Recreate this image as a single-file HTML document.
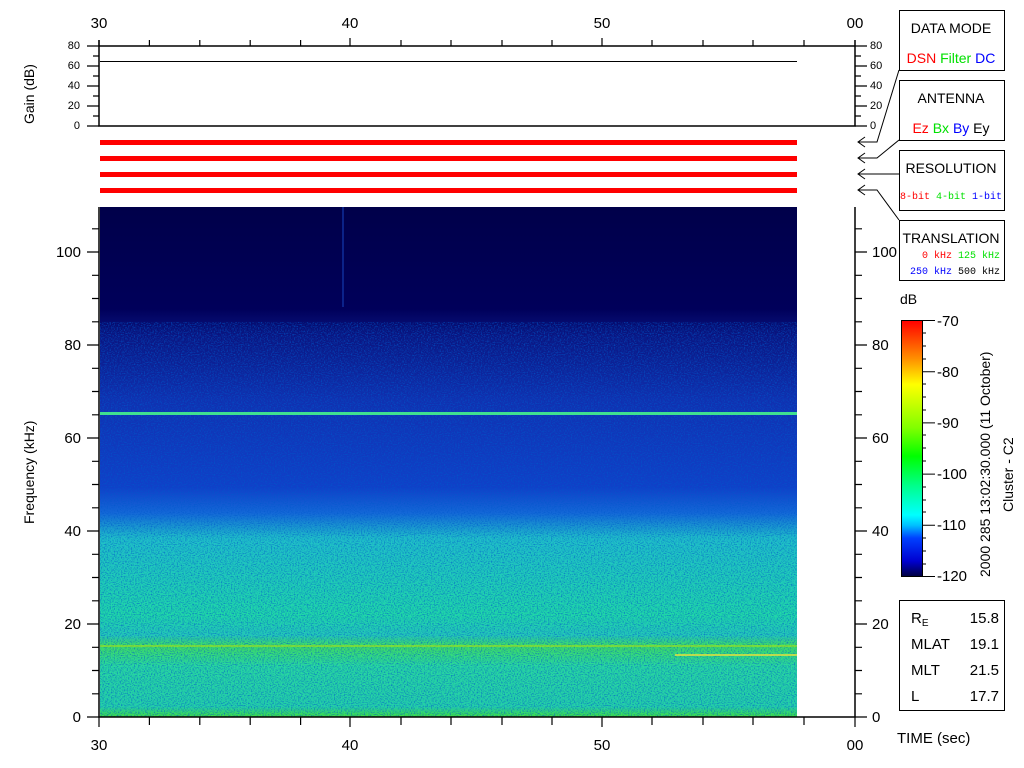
<!DOCTYPE html>
<html><head><meta charset="utf-8"><style>
html,body{margin:0;padding:0;background:#fff;}
svg{display:block;}
text{font-family:"Liberation Sans",sans-serif;}
.m{font-family:"Liberation Mono",monospace;font-size:11px;}
</style></head><body>
<svg width="1024" height="768" viewBox="0 0 1024 768" xmlns="http://www.w3.org/2000/svg">
<defs>
<linearGradient id="sp" x1="0" y1="0" x2="0" y2="1">
<stop offset="0" stop-color="#00004a"/>
<stop offset="0.2" stop-color="#00005a"/>
<stop offset="0.25" stop-color="#0a1480"/>
<stop offset="0.38" stop-color="#1030b0"/>
<stop offset="0.55" stop-color="#1040c8"/>
<stop offset="0.6" stop-color="#1468d8"/>
<stop offset="0.65" stop-color="#20c0c8"/>
<stop offset="0.8" stop-color="#20d8a8"/>
<stop offset="0.84" stop-color="#24c8b8"/>
<stop offset="0.86" stop-color="#40e060"/>
<stop offset="0.9" stop-color="#28d8a0"/>
<stop offset="0.98" stop-color="#24d0a8"/>
<stop offset="1" stop-color="#40e040"/>
</linearGradient>
<linearGradient id="cb" x1="0" y1="1" x2="0" y2="0">
<stop offset="0" stop-color="#000040"/>
<stop offset="0.06" stop-color="#0000d0"/>
<stop offset="0.15" stop-color="#0040ff"/>
<stop offset="0.2" stop-color="#00c0ff"/>
<stop offset="0.24" stop-color="#00ffff"/>
<stop offset="0.35" stop-color="#00ff90"/>
<stop offset="0.47" stop-color="#00ff00"/>
<stop offset="0.58" stop-color="#80ff00"/>
<stop offset="0.75" stop-color="#ffff00"/>
<stop offset="0.85" stop-color="#ff9000"/>
<stop offset="1" stop-color="#ff0000"/>
</linearGradient>
<filter id="nz" x="0" y="0" width="1" height="1">
<feTurbulence type="fractalNoise" baseFrequency="0.7 0.9" numOctaves="1" seed="3"/>
<feColorMatrix values="0 0 0 0 0  0 0 0 0 0.1  0 0 0 0 0.6  2.5 0 0 0 -1.1"/>
</filter>
</defs>

<rect x="100" y="207" width="697" height="510" fill="url(#sp)"/>
<rect x="100" y="322" width="697" height="395" filter="url(#nz)" opacity="0.8"/>
<rect x="100" y="412" width="697" height="3" fill="#40e090"/>
<rect x="100" y="645" width="697" height="2" fill="#a0e020" opacity="0.6"/>
<rect x="675" y="654" width="122" height="2" fill="#e0e040" opacity="0.8"/>
<rect x="342" y="207" width="2" height="100" fill="#1030a0" opacity="0.7"/>

<g stroke="#000" stroke-width="1.5" fill="none">
<path d="M99 40V126H855V40M99 46H855"/>
<path d="M100 61.5H797" stroke-width="1"/>
<path d="M99 207V717H855V207"/>
</g>

<g fill="#ff0000">
<rect x="100" y="140" width="697" height="5"/>
<rect x="100" y="156" width="697" height="5"/>
<rect x="100" y="172" width="697" height="5"/>
<rect x="100" y="188" width="697" height="5"/>
</g>

<g stroke="#000" stroke-width="1.2">
<path d="M99 40V46M149.4 40V46M199.8 40V46M250.2 40V46M300.6 40V46M350 38V46M401 40V46M451 40V46M502 40V46M552 40V46M602 38V46M652 40V46M703 40V46M753 40V46M804 40V46"/>
<path d="M149.4 717V725M199.8 717V725M250.2 717V725M300.6 717V725M350 717V727M401 717V725M451 717V725M502 717V725M552 717V725M602 717V727M652 717V725M703 717V725M753 717V725M804 717V725M855 717V727M99 717V727"/>
<path d="M87 46H99M93 56H99M87 66H99M93 76H99M87 86H99M93 96H99M87 106H99M93 116H99M87 126H99"/>
<path d="M855 46H867M855 56H861M855 66H867M855 76H861M855 86H867M855 96H861M855 106H867M855 116H861M855 126H867"/>
<path d="M87 717H99M92 693.8H99M92 670.5H99M92 647.3H99M87 624H99M92 600.8H99M92 577.5H99M92 554.3H99M87 531H99M92 507.8H99M92 484.5H99M92 461.3H99M87 438H99M92 414.8H99M92 391.5H99M92 368.3H99M87 345H99M92 321.8H99M92 298.5H99M92 275.3H99M87 252H99M92 228.8H99"/>
<path d="M855 717H867M855 693.8H862M855 670.5H862M855 647.3H862M855 624H867M855 600.8H862M855 577.5H862M855 554.3H862M855 531H867M855 507.8H862M855 484.5H862M855 461.3H862M855 438H867M855 414.8H862M855 391.5H862M855 368.3H862M855 345H867M855 321.8H862M855 298.5H862M855 275.3H862M855 252H867M855 228.8H862"/>
</g>

<g font-size="15" text-anchor="middle">
<text x="99" y="28">30</text><text x="350" y="28">40</text><text x="602" y="28">50</text><text x="855" y="28">00</text>
<text x="99" y="750">30</text><text x="350" y="750">40</text><text x="602" y="750">50</text><text x="855" y="750">00</text>
</g>
<g class="m" text-anchor="end">
<text x="80" y="49">80</text><text x="80" y="69">60</text><text x="80" y="89">40</text><text x="80" y="109">20</text><text x="80" y="129">0</text>
</g>
<g class="m">
<text x="870" y="49">80</text><text x="870" y="69">60</text><text x="870" y="89">40</text><text x="870" y="109">20</text><text x="870" y="129">0</text>
</g>
<g font-size="15" text-anchor="end">
<text x="81" y="722">0</text><text x="81" y="629">20</text><text x="81" y="536">40</text><text x="81" y="443">60</text><text x="81" y="350">80</text><text x="81" y="257">100</text>
</g>
<g font-size="15">
<text x="872" y="722">0</text><text x="872" y="629">20</text><text x="872" y="536">40</text><text x="872" y="443">60</text><text x="872" y="350">80</text><text x="872" y="257">100</text>
</g>
<text font-size="14" transform="translate(34,124) rotate(-90)">Gain (dB)</text>
<text font-size="14" transform="translate(34,524) rotate(-90)">Frequency (kHz)</text>

<g stroke="#000" stroke-width="1" fill="none">
<path d="M899 70L877 142H858M865 137L858 142L865 147"/>
<path d="M899 140L877 158H858M865 153L858 158L865 163"/>
<path d="M899 174H858M865 169L858 174L865 179"/>
<path d="M899 220L877 190H858M865 185L858 190L865 195"/>
<rect x="899.5" y="10.5" width="105" height="60"/>
<rect x="899.5" y="80.5" width="105" height="60"/>
<rect x="899.5" y="150.5" width="105" height="60"/>
<rect x="899.5" y="220.5" width="105" height="60"/>
<rect x="899.5" y="600.5" width="105" height="110"/>
</g>
<g font-size="14" text-anchor="middle">
<text x="951" y="33">DATA MODE</text>
<text x="951" y="103">ANTENNA</text>
<text x="951" y="173">RESOLUTION</text>
<text x="951" y="243">TRANSLATION</text>
</g>
<text font-size="14" x="951" y="63" text-anchor="middle"><tspan fill="#ff0000">DSN</tspan> <tspan fill="#00e000">Filter</tspan> <tspan fill="#0000ff">DC</tspan></text>
<text font-size="14" x="951" y="133" text-anchor="middle"><tspan fill="#ff0000">Ez</tspan>  <tspan fill="#00e000">Bx</tspan>  <tspan fill="#0000ff">By</tspan>  <tspan fill="#000">Ey</tspan></text>
<text class="m" x="951" y="199" text-anchor="middle" style="font-size:10px"><tspan fill="#ff0000">8-bit</tspan> <tspan fill="#00e000">4-bit</tspan> <tspan fill="#0000ff">1-bit</tspan></text>
<text class="m" style="font-size:10px" x="1000" y="258" text-anchor="end"><tspan fill="#ff0000">0 kHz</tspan> <tspan fill="#00e000">125 kHz</tspan></text>
<text class="m" style="font-size:10px" x="1000" y="274" text-anchor="end"><tspan fill="#0000ff">250 kHz</tspan> <tspan fill="#000">500 kHz</tspan></text>

<text font-size="14" x="900" y="304">dB</text>
<rect x="901.5" y="320.5" width="21" height="256" fill="url(#cb)" stroke="#000" stroke-width="1"/>
<g stroke="#000" stroke-width="1">
<path d="M922 320.5H935M922 371.7H935M922 422.9H935M922 474.1H935M922 525.3H935M922 576.5H935"/>
<path d="M922 333H926M922 346H926M922 359H926M922 384H926M922 397H926M922 410H926M922 435H926M922 448H926M922 461H926M922 487H926M922 500H926M922 512H926M922 538H926M922 551H926M922 564H926"/>
</g>
<g font-size="15">
<text x="937" y="326">-70</text><text x="937" y="377">-80</text><text x="937" y="428">-90</text><text x="937" y="479">-100</text><text x="937" y="530">-110</text><text x="937" y="581">-120</text>
</g>
<text font-size="14" transform="translate(990,577) rotate(-90)">2000 285 13:02:30.000 (11 October)</text>
<text font-size="14" transform="translate(1013,512) rotate(-90)">Cluster - C2</text>

<g font-size="15">
<text x="911" y="623">R<tspan font-size="10" dy="3">E</tspan></text>
<text x="911" y="649">MLAT</text><text x="911" y="675">MLT</text><text x="911" y="701">L</text>
</g>
<g font-size="15" text-anchor="end">
<text x="999" y="623">15.8</text><text x="999" y="649">19.1</text><text x="999" y="675">21.5</text><text x="999" y="701">17.7</text>
</g>
<text font-size="15" x="897" y="743">TIME (sec)</text>
</svg>
</body></html>
